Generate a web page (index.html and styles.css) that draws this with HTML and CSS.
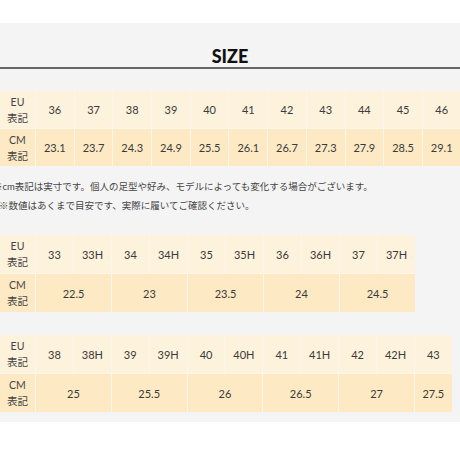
FILE: index.html
```html
<!DOCTYPE html>
<html lang="ja">
<head>
<meta charset="utf-8">
<link rel="stylesheet" href="styles.css">
</head>
<body>
<section class="size">
  <h2 class="title">SIZE</h2>
  <div class="chart chart-a">
    <div class="lab eu">EU<br>表記</div>
    <div class="c eu">36</div><div class="c eu">37</div><div class="c eu">38</div><div class="c eu">39</div><div class="c eu">40</div><div class="c eu">41</div><div class="c eu">42</div><div class="c eu">43</div><div class="c eu">44</div><div class="c eu">45</div><div class="c eu">46</div>
    <div class="lab cm">CM<br>表記</div>
    <div class="c cm">23.1</div><div class="c cm">23.7</div><div class="c cm">24.3</div><div class="c cm">24.9</div><div class="c cm">25.5</div><div class="c cm">26.1</div><div class="c cm">26.7</div><div class="c cm">27.3</div><div class="c cm">27.9</div><div class="c cm">28.5</div><div class="c cm">29.1</div>
  </div>
  <div class="notes">
    <p class="note n1">※cm表記は実寸です。個人の足型や好み、モデルによっても変化する場合がございます。</p>
    <p class="note n2">※数値はあくまで目安です、実際に履いてご確認ください。</p>
  </div>
  <div class="chart chart-b">
    <div class="lab eu">EU<br>表記</div>
    <div class="c eu">33</div><div class="c eu">33H</div><div class="c eu">34</div><div class="c eu">34H</div><div class="c eu">35</div><div class="c eu">35H</div><div class="c eu">36</div><div class="c eu">36H</div><div class="c eu">37</div><div class="c eu">37H</div>
    <div class="lab cm">CM<br>表記</div>
    <div class="c cm span2">22.5</div><div class="c cm span2">23</div><div class="c cm span2">23.5</div><div class="c cm span2">24</div><div class="c cm span2">24.5</div>
  </div>
  <div class="chart chart-c">
    <div class="lab eu">EU<br>表記</div>
    <div class="c eu">38</div><div class="c eu">38H</div><div class="c eu">39</div><div class="c eu">39H</div><div class="c eu">40</div><div class="c eu">40H</div><div class="c eu">41</div><div class="c eu">41H</div><div class="c eu">42</div><div class="c eu">42H</div><div class="c eu">43</div>
    <div class="lab cm">CM<br>表記</div>
    <div class="c cm span2">25</div><div class="c cm span2">25.5</div><div class="c cm span2">26</div><div class="c cm span2">26.5</div><div class="c cm span2">27</div><div class="c cm">27.5</div>
  </div>
</section>
</body>
</html>
```
FILE: styles.css
```css
html, body {
  margin: 0;
  padding: 0;
  background: #ffffff;
  overflow: hidden;
}
body {
  font-family: Lato, "Noto Sans CJK JP", sans-serif;
  color: #3a3a3a;
  width: 460px;
  height: 460px;
}
.size {
  margin-top: 23px;
  background: #f4f4f4;
  padding-bottom: 10px;
}
.title {
  margin: 0 0 22px 0;
  padding-top: 22px;
  height: 22px;
  line-height: 22px;
  font-size: 18px;
  font-weight: 900;
  text-align: center;
  color: #111;
  border-bottom: 2px solid #666;
}
.chart {
  display: grid;
  gap: 1px;
  width: max-content;
  background: #fbf5ea;
}
.chart-a {
  grid-template-columns: 35px repeat(11, 37.7px);
  grid-template-rows: 37px 37px;
}
.chart-b {
  grid-template-columns: 35px repeat(10, 37px);
  grid-template-rows: 38px 38px;
  margin-top: 20px;
}
.chart-c {
  grid-template-columns: 35px repeat(11, 36.9px);
  grid-template-rows: 38px 38px;
  margin-top: 23px;
}
.c, .lab {
  display: flex;
  align-items: center;
  justify-content: center;
  text-align: center;
  font-size: 11px;
}
.lab {
  font-size: 10.5px;
  line-height: 16px;
  color: #444;
}
.eu {
  background: #fdf2dc;
}
.cm {
  background: #fdeac4;
}
.span2 {
  grid-column: span 2;
}
.notes {
  margin-top: 11px;
}
.note {
  margin: 0;
  font-size: 9.5px;
  line-height: 19px;
  color: #444;
  white-space: nowrap;
}
.n1 {
  margin-left: -7px;
}
.n2 {
  margin-left: -1px;
}
```
